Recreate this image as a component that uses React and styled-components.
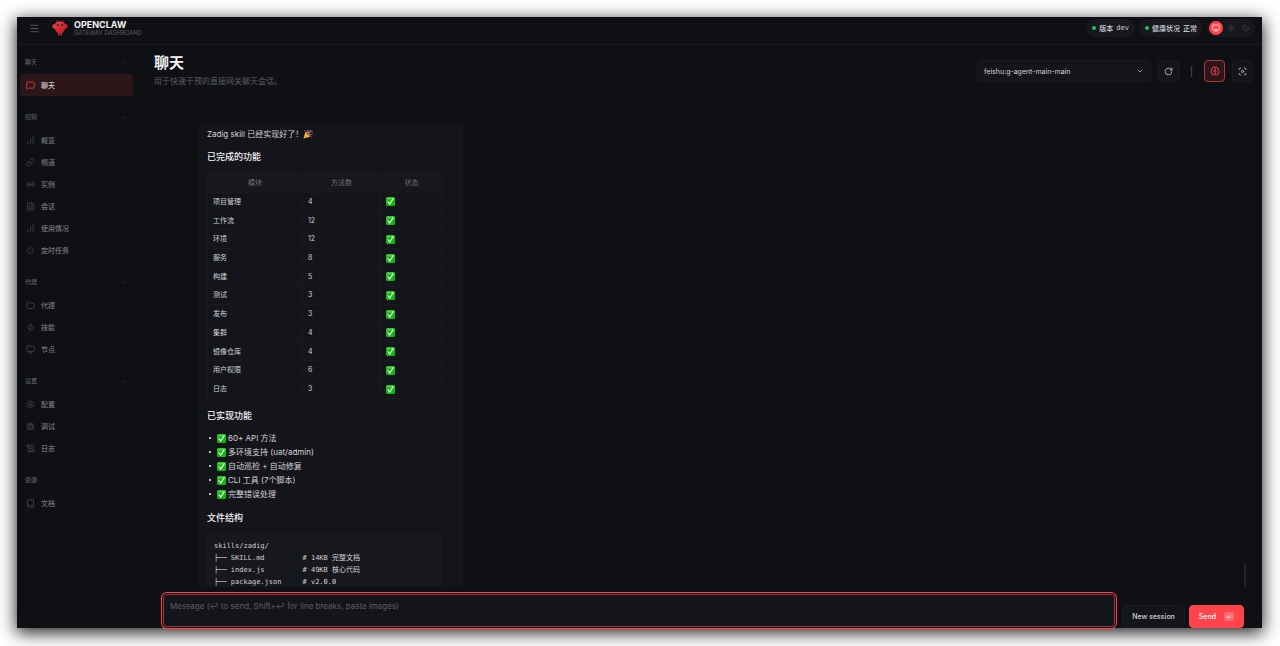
import React, { useState } from 'react';
import styled, { createGlobalStyle, css } from 'styled-components';
import {
  Menu,
  MessageSquare,
  ChartNoAxesColumnIncreasing,
  Link as LinkIcon,
  Radio,
  FileText,
  Loader,
  Folder,
  Zap,
  Monitor,
  Settings,
  Bug,
  ScrollText,
  Book,
  Sun,
  Moon,
  RotateCw,
  Brain,
  Focus,
  ChevronDown,
} from 'lucide-react';

const colors = {
  bg: '#0f1014',
  card: '#14151a',
  elevated: '#17181d',
  border: '#1b1c21',
  text: '#d3d3d6',
  strong: '#f4f4f5',
  muted: '#5c5d66',
  faint: '#484950',
  accent: '#ff434b',
  ok: '#22c55e',
};

const sans = "Inter, 'Noto Sans CJK SC', sans-serif";
const mono = "'DejaVu Sans Mono', 'Noto Sans CJK SC', monospace";

const GlobalStyle = createGlobalStyle`
  * {
    box-sizing: border-box;
  }

  body {
    margin: 0;
    background: #fff;
    font-family: ${sans};
    -webkit-font-smoothing: antialiased;
  }

  button, select, textarea {
    font-family: inherit;
    margin: 0;
  }
`;

const Page = styled.div`
  height: 100vh;
  padding: 17px 18px 18px 17px;
  display: flex;
  overflow: hidden;
`;

const Shell = styled.div`
  flex: 1;
  min-width: 0;
  display: flex;
  flex-direction: column;
  background: ${colors.bg};
  color: ${colors.text};
  box-shadow: 0 4px 16px 1px rgba(0, 0, 0, 0.85);
`;

const Topbar = styled.header`
  flex: none;
  height: 28px;
  padding: 0 7px 5px 12px;
  display: flex;
  align-items: center;
  gap: 12px;
  border-bottom: 1px solid ${colors.border};
`;

const MenuButton = styled.button`
  display: flex;
  padding: 0;
  border: none;
  background: none;
  color: ${colors.muted};
`;

const Brand = styled.div`
  flex: 1;
  display: flex;
  align-items: center;
  gap: 6px;
`;

const BrandTitle = styled.div`
  font-size: 9px;
  line-height: 9px;
  font-weight: 700;
  color: ${colors.strong};
`;

const BrandSub = styled.div`
  font-size: 6px;
  line-height: 7px;
  color: ${colors.muted};
`;

const TopStatus = styled.div`
  display: flex;
  align-items: center;
  gap: 4px;
`;

const Pill = styled.div`
  height: 18px;
  padding: 0 6px;
  display: flex;
  align-items: center;
  gap: 3px;
  border-radius: 9px;
  background: ${colors.elevated};
  font-size: 7px;
  font-weight: 500;
  white-space: nowrap;
`;

const Dot = styled.span`
  width: 4px;
  height: 4px;
  border-radius: 50%;
  background: ${colors.ok};
`;

const MonoText = styled.span`
  font-family: ${mono};
`;

const ThemeSwitch = styled.div`
  height: 18px;
  padding: 0 2px;
  display: flex;
  align-items: center;
  gap: 1px;
  border-radius: 9px;
  background: ${colors.elevated};
`;

const ThemeButton = styled.button`
  width: 14px;
  height: 14px;
  padding: 0;
  display: flex;
  align-items: center;
  justify-content: center;
  border: none;
  border-radius: 50%;
  background: ${props => (props.$active ? colors.accent : 'transparent')};
  color: ${props => (props.$active ? '#fff' : colors.faint)};
`;

const Body = styled.div`
  flex: 1;
  min-height: 0;
  display: flex;
`;

const Sidebar = styled.nav`
  flex: none;
  width: 119px;
  padding: 11px 3px 0;
  overflow: hidden;
`;

const NavSection = styled.section`
  margin-bottom: 15px;
`;

const SectionHeader = styled.button`
  width: 100%;
  height: 11px;
  margin-bottom: 7px;
  padding: 0 6px 0 5px;
  display: flex;
  align-items: center;
  justify-content: space-between;
  border: none;
  background: none;
  color: ${colors.muted};
  font-size: 6px;
  font-weight: 500;
`;

const Collapse = styled.span`
  color: #3a3b41;
`;

const NavLink = styled.a`
  height: 22px;
  padding: 0 6px;
  display: flex;
  align-items: center;
  gap: 6px;
  border-radius: 4px;
  color: #75767f;
  font-size: 7px;
  font-weight: 500;
  text-decoration: none;

  svg {
    color: ${colors.faint};
  }

  ${props => props.$active && css`
    background: #2b161a;
    color: ${colors.text};

    svg {
      color: ${colors.accent};
    }
  `}
`;

const Main = styled.main`
  flex: 1;
  min-width: 0;
  display: flex;
  flex-direction: column;
`;

const ContentHeader = styled.div`
  flex: none;
  height: 79px;
  padding: 8px 9px 0 18px;
  display: flex;
  align-items: flex-start;
  justify-content: space-between;
`;

const PageTitle = styled.h1`
  margin: 0;
  font-size: 15px;
  line-height: 20px;
  font-weight: 700;
  color: ${colors.strong};
`;

const PageSub = styled.p`
  margin: 2px 0 0;
  font-size: 8px;
  line-height: 12px;
  color: ${colors.muted};
`;

const Controls = styled.div`
  margin-top: 7px;
  display: flex;
  align-items: center;
  gap: 7px;
`;

const SelectWrap = styled.label`
  width: 174px;
  height: 22px;
  padding: 0 6px;
  display: flex;
  align-items: center;
  border: 1px solid ${colors.border};
  border-radius: 4px;
  background: ${colors.card};
`;

const SessionSelect = styled.select`
  flex: 1;
  min-width: 0;
  padding: 0;
  appearance: none;
  border: none;
  outline: none;
  background: transparent;
  color: ${colors.text};
  font-size: 7px;
`;

const IconButton = styled.button`
  width: 21px;
  height: 22px;
  padding: 0;
  display: flex;
  align-items: center;
  justify-content: center;
  border: 1px solid ${props => (props.$active ? '#b3343c' : colors.border)};
  border-radius: 4px;
  background: ${props => (props.$active ? '#2b161a' : colors.card)};
  color: ${props => (props.$active ? colors.accent : colors.text)};
`;

const Separator = styled.span`
  width: 11px;
  text-align: center;
  font-size: 9px;
  color: ${colors.muted};
`;

const Thread = styled.div`
  flex: 1;
  min-height: 0;
  padding: 0 16px 0 62px;
  display: flex;
  align-items: flex-start;
  justify-content: space-between;
  overflow: hidden;
`;

const ScrollThumb = styled.div`
  align-self: flex-end;
  width: 2px;
  height: 23px;
  border-radius: 1px;
  background: #24252a;
`;

const Bubble = styled.article`
  width: 265px;
  padding: 4px 21px 0 9px;
  border-radius: 4px;
  background: ${colors.card};
  font-size: 8px;
`;

const Lead = styled.p`
  margin: 0;
  display: flex;
  align-items: center;
  line-height: 12px;
`;

const Heading = styled.h3`
  margin: 10px 0 8px;
  font-size: 9px;
  line-height: 14px;
  font-weight: 500;
  color: ${colors.strong};
`;

const ModuleTable = styled.table`
  width: 236px;
  height: 226px;
  margin-top: 9px;
  table-layout: fixed;
  border-collapse: collapse;
  font-size: 7px;
  line-height: 10px;

  th, td {
    padding: 0 5px;
    border: 1px solid #1a1b1f;
  }

  th {
    height: 19px;
    background: ${colors.elevated};
    color: #70717a;
    font-weight: 400;
  }

  th:nth-child(1) {
    width: 95px;
  }

  th:nth-child(2) {
    width: 78px;
  }

  svg {
    display: block;
  }
`;

const FeatureList = styled.ul`
  margin: 0;
  padding: 0 0 0 2px;
  list-style: none;
  line-height: 14px;
`;

const Feature = styled.li`
  display: flex;
  align-items: center;
  gap: 2px;

  &::before {
    content: '';
    width: 2px;
    height: 2px;
    margin-right: 4px;
    border-radius: 1px;
    background: ${colors.strong};
  }
`;

const CodeBlock = styled.pre`
  margin: 0;
  padding: 6px;
  border: 1px solid ${colors.border};
  border-radius: 4px;
  background: ${colors.elevated};
  font-family: ${mono};
  font-size: 7px;
  line-height: 12px;
`;

const Composer = styled.form`
  flex: none;
  padding: 7px 18px 0 27px;
  display: flex;
  align-items: flex-end;
  gap: 4px;
`;

const MessageInput = styled.textarea`
  flex: 1;
  min-width: 0;
  height: 33px;
  margin: 0 3px 1px 0;
  padding: 5px 6px;
  display: block;
  resize: none;
  outline: none;
  border: 1px solid #a82f37;
  border-radius: 4px;
  background: ${colors.card};
  box-shadow: 0 0 0 1px ${colors.bg}, 0 0 0 2px ${colors.accent};
  color: ${colors.text};
  font-size: 8px;
  line-height: 12px;

  &::placeholder {
    color: ${colors.muted};
  }
`;

const ActionButton = styled.button`
  height: 23px;
  padding: 0 9px;
  display: flex;
  align-items: center;
  gap: 8px;
  border: 1px solid ${props => (props.$primary ? colors.accent : colors.border)};
  border-radius: 4px;
  background: ${props => (props.$primary ? colors.accent : colors.card)};
  color: ${props => (props.$primary ? '#fff' : colors.text)};
  font-size: 7px;
  font-weight: 500;
  white-space: nowrap;
`;

const Key = styled.kbd`
  width: 10px;
  height: 9px;
  border-radius: 2px;
  background: #ff6d73;
  font-family: 'DejaVu Sans', sans-serif;
  font-size: 6px;
  line-height: 9px;
  text-align: center;
`;

const Logo = () => (
  <svg width="16" height="16" viewBox="0 0 32 32" aria-hidden="true">
    <defs>
      <linearGradient id="claw" x1="0" y1="0" x2="1" y2="1">
        <stop offset="0" stopColor="#ff4148" />
        <stop offset="1" stopColor="#a5141d" />
      </linearGradient>
    </defs>
    <path d="M11 5 9 1.500M21 5l2-3.500" stroke="#d92f36" strokeWidth="1.500" strokeLinecap="round" />
    <path
      fill="url(#claw)"
      d="M16 2.500c5 0 9 2.500 10.500 6 3-1 5.500 1.500 5 4.500-.5 3-3 4.500-5.500 5-1 4-3.500 7-6 8.500V31h-3v-3.500h-2V31h-3v-4.500c-2.500-1.500-5-4.500-6-8.500-2.500-.5-5-2-5.500-5-.5-3 2-5.500 5-4.500C7 5 11 2.500 16 2.500z"
    />
    <circle cx="11.500" cy="9.500" r="2" fill="#11151b" />
    <circle cx="20.500" cy="9.500" r="2" fill="#11151b" />
    <circle cx="12" cy="9" r=".8" fill="#00d5c8" />
    <circle cx="21" cy="9" r=".8" fill="#00d5c8" />
  </svg>
);

const Check = () => (
  <svg width="9" height="9" viewBox="0 0 18 18" role="img" aria-label="✅">
    <rect width="18" height="18" rx="3" fill="#12b70f" />
    <path d="M1 3a2 2 0 0 1 2-2h12a2 2 0 0 1 2 2v2H1z" fill="#4bd348" />
    <path d="m4 9.500 3.500 4.500L14 4" fill="none" stroke="#fff" strokeWidth="2.400" strokeLinecap="round" />
  </svg>
);

const Party = () => (
  <svg width="10" height="10" viewBox="0 0 20 20" role="img" aria-label="🎉">
    <path d="M1 19 5 5l10 10z" fill="#f9b92f" />
    <path d="M3 13l4 4" stroke="#c9772b" strokeWidth="1.500" />
    <ellipse cx="10.500" cy="9.500" rx="2.500" ry="6" transform="rotate(-45 10.500 9.500)" fill="#a8642a" />
    <path d="M9 8c2-2 2-4 0-6" fill="none" stroke="#4da3e8" strokeWidth="2" />
    <path d="M11 9c1-4 5-3 5-7" fill="none" stroke="#e8505f" strokeWidth="2.400" />
    <path d="M13 12c2-2 4 0 6-2" fill="none" stroke="#4d7de8" strokeWidth="2" />
    <circle cx="4" cy="3" r="1.200" fill="#e8505f" />
    <circle cx="18" cy="6" r="1.200" fill="#f7d02c" />
    <circle cx="17" cy="16" r="1.200" fill="#b35be0" />
  </svg>
);

const sections = [
  { title: '聊天', items: [{ icon: MessageSquare, label: '聊天' }] },
  {
    title: '控制',
    items: [
      { icon: ChartNoAxesColumnIncreasing, label: '概览' },
      { icon: LinkIcon, label: '频道' },
      { icon: Radio, label: '实例' },
      { icon: FileText, label: '会话' },
      { icon: ChartNoAxesColumnIncreasing, label: '使用情况' },
      { icon: Loader, label: '定时任务' },
    ],
  },
  {
    title: '代理',
    items: [
      { icon: Folder, label: '代理' },
      { icon: Zap, label: '技能' },
      { icon: Monitor, label: '节点' },
    ],
  },
  {
    title: '设置',
    items: [
      { icon: Settings, label: '配置' },
      { icon: Bug, label: '调试' },
      { icon: ScrollText, label: '日志' },
    ],
  },
  { title: '资源', external: true, items: [{ icon: Book, label: '文档' }] },
];

const modules = [
  ['项目管理', 4],
  ['工作流', 12],
  ['环境', 12],
  ['服务', 8],
  ['构建', 5],
  ['测试', 3],
  ['发布', 3],
  ['集群', 4],
  ['镜像仓库', 4],
  ['用户权限', 6],
  ['日志', 3],
];

const features = [
  '60+ API 方法',
  '多环境支持 (uat/admin)',
  '自动巡检 + 自动修复',
  'CLI 工具 (7个脚本)',
  '完整错误处理',
];

const fileTree = `skills/zadig/
├── SKILL.md         # 14KB 完整文档
├── index.js         # 49KB 核心代码
├── package.json     # v2.0.0`;

const themes = [
  { name: 'system', icon: Monitor },
  { name: 'light', icon: Sun },
  { name: 'dark', icon: Moon },
];

const App = () => {
  const [active, setActive] = useState('聊天');
  const [theme, setTheme] = useState('system');
  const [message, setMessage] = useState('');

  return (
    <Page>
      <GlobalStyle />
      <Shell>
        <Topbar>
          <MenuButton aria-label="Menu">
            <Menu size={11} strokeWidth={2} />
          </MenuButton>
          <Brand>
            <Logo />
            <div>
              <BrandTitle>OPENCLAW</BrandTitle>
              <BrandSub>GATEWAY DASHBOARD</BrandSub>
            </div>
          </Brand>
          <TopStatus>
            <Pill>
              <Dot />
              <span>版本</span>
              <MonoText>dev</MonoText>
            </Pill>
            <Pill>
              <Dot />
              <span>健康状况</span>
              <MonoText>正常</MonoText>
            </Pill>
            <ThemeSwitch>
              {themes.map(({ name, icon: Icon }) => (
                <ThemeButton
                  key={name}
                  aria-label={name}
                  $active={theme === name}
                  onClick={() => setTheme(name)}
                >
                  <Icon size={8} />
                </ThemeButton>
              ))}
            </ThemeSwitch>
          </TopStatus>
        </Topbar>

        <Body>
          <Sidebar>
            {sections.map((section) => (
              <NavSection key={section.title}>
                <SectionHeader>
                  <span>{section.title}</span>
                  {!section.external && <Collapse>−</Collapse>}
                </SectionHeader>
                {section.items.map(({ icon: Icon, label }) => (
                  <NavLink
                    key={label}
                    href="#"
                    $active={section.title === '聊天' && active === label}
                    onClick={() => setActive(label)}
                  >
                    <Icon size={9} strokeWidth={2} />
                    {label}
                  </NavLink>
                ))}
              </NavSection>
            ))}
          </Sidebar>

          <Main>
            <ContentHeader>
              <div>
                <PageTitle>聊天</PageTitle>
                <PageSub>用于快速干预的直接网关聊天会话。</PageSub>
              </div>
              <Controls>
                <SelectWrap>
                  <SessionSelect aria-label="Session">
                    <option>feishu:g-agent-main-main</option>
                  </SessionSelect>
                  <ChevronDown size={8} />
                </SelectWrap>
                <IconButton aria-label="Refresh">
                  <RotateCw size={9} />
                </IconButton>
                <Separator>|</Separator>
                <IconButton $active aria-label="Thinking">
                  <Brain size={10} />
                </IconButton>
                <IconButton aria-label="Focus mode">
                  <Focus size={9} />
                </IconButton>
              </Controls>
            </ContentHeader>

            <Thread>
              <Bubble>
                <Lead>
                  Zadig skill 已经实现好了！
                  <Party />
                </Lead>
                <Heading>已完成的功能</Heading>
                <ModuleTable>
                  <thead>
                    <tr>
                      <th>模块</th>
                      <th>方法数</th>
                      <th>状态</th>
                    </tr>
                  </thead>
                  <tbody>
                    {modules.map(([name, count]) => (
                      <tr key={name}>
                        <td>{name}</td>
                        <td>{count}</td>
                        <td><Check /></td>
                      </tr>
                    ))}
                  </tbody>
                </ModuleTable>
                <Heading>已实现功能</Heading>
                <FeatureList>
                  {features.map((feature) => (
                    <Feature key={feature}>
                      <Check />
                      {feature}
                    </Feature>
                  ))}
                </FeatureList>
                <Heading>文件结构</Heading>
                <CodeBlock>{fileTree}</CodeBlock>
              </Bubble>
              <ScrollThumb />
            </Thread>

            <Composer onSubmit={(e) => e.preventDefault()}>
              <MessageInput
                aria-label="Message"
                placeholder="Message (↩ to send, Shift+↩ for line breaks, paste images)"
                value={message}
                onChange={(e) => setMessage(e.target.value)}
              />
              <ActionButton type="button">New session</ActionButton>
              <ActionButton type="submit" $primary>
                Send
                <Key>↵</Key>
              </ActionButton>
            </Composer>
          </Main>
        </Body>
      </Shell>
    </Page>
  );
};

export default App;
